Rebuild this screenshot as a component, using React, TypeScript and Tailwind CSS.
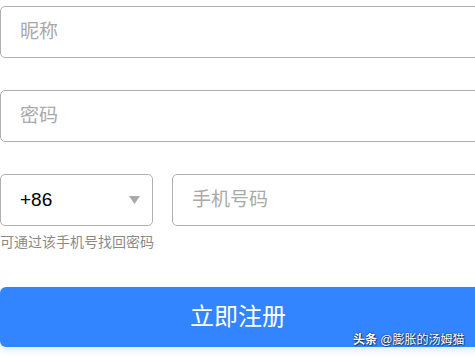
import React from "react";

const font = { fontFamily: '"Liberation Sans", "Noto Sans CJK SC", sans-serif' };

export default function App() {
  return (
    <div className="w-[475px] h-[357px] overflow-hidden bg-white" style={font}>
      <div className="w-[540px] flex flex-col pt-[6px]">
        <div className="h-[52px] border border-[#b0b0b0] rounded-[5px] flex items-center pl-[19px] text-[19px] text-[#a9a9a9]">
          昵称
        </div>
        <div className="h-[52px] mt-[32px] border border-[#b0b0b0] rounded-[5px] flex items-center pl-[19px] text-[19px] text-[#a9a9a9]">
          密码
        </div>
        <div className="flex mt-[32px] gap-[19px]">
          <div className="w-[153px] h-[52px] border border-[#b0b0b0] rounded-[5px] flex items-center justify-between pl-[19px] pr-[12px]">
            <span className="text-[19px] text-black" style={{ fontFamily: '"Liberation Sans", sans-serif' }}>+86</span>
            <svg width="11" height="9" viewBox="0 0 11 9">
              <polygon points="0,0 11,0 5.5,8" fill="#a9a9a9" />
            </svg>
          </div>
          <div className="flex-1 h-[52px] border border-[#b0b0b0] rounded-[5px] flex items-center pl-[19px] text-[19px] text-[#a9a9a9]">
            手机号码
          </div>
        </div>
        <div className="mt-[7px] text-[14px] leading-[18px] text-[#8a8a8a]">可通过该手机号找回密码</div>
        <div className="relative mt-[36px] h-[60px] bg-[#3385ff] rounded-[6px] shadow-[0_4px_6px_rgba(51,133,255,0.15)] flex items-center pl-[190px] text-white text-[24px]">
          立即注册
          <div
            className="absolute left-[353px] top-[46px] text-[12px] leading-[14px] text-white whitespace-nowrap"
            style={{ textShadow: "0 0 2px rgba(0,0,0,0.7), 1px 1px 1px rgba(0,0,0,0.5)" }}
          >
            <span className="font-bold">头条</span> @膨胀的汤姆猫
          </div>
        </div>
      </div>
    </div>
  );
}
